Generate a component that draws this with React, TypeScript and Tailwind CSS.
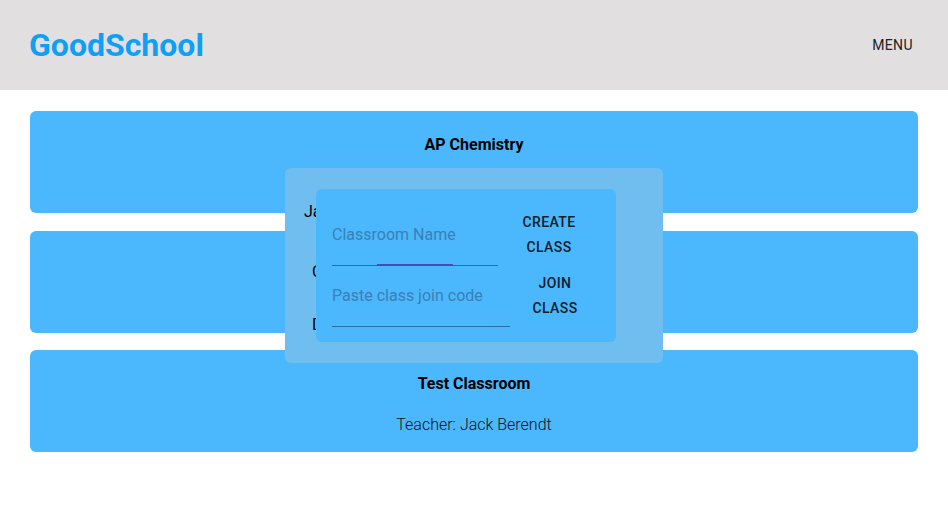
import React from "react";

const cards = [
  { title: "AP Chemistry", teacher: "Teacher: Jack Berendt" },
  { title: "Chemistry", teacher: "Teacher: Jack Berendt" },
  { title: "Test Classroom", teacher: "Teacher: Jack Berendt" },
];

export default function App() {
  return (
    <div
      className="relative w-[948px] h-[531px] bg-white overflow-hidden"
      style={{ fontFamily: "Roboto, 'Noto Sans', sans-serif" }}
    >
      <header className="h-[90px] bg-[#e1dfe0] flex items-center justify-between pl-[29px] pr-[27px]">
        <h1 className="text-[32px] font-bold text-[#0fa0f6] leading-none">GoodSchool</h1>
        <button className="px-2 py-1.5 text-[14px] font-normal tracking-[0.4px] text-[#212121] leading-[24px]">
          MENU
        </button>
      </header>

      <main className="px-[30px] pt-[21px] flex flex-col gap-[17.5px]">
        {cards.map((c) => (
          <div
            key={c.title}
            className="h-[102px] bg-[#4bb8fe] rounded-[6px] flex flex-col items-center pt-[25px] text-black"
          >
            <div className="text-[16px] font-bold leading-[18px]">{c.title}</div>
            <div className="mt-[20px] text-[16px] font-light leading-[24px] text-[#111]">{c.teacher}</div>
          </div>
        ))}
      </main>

      {/* Overlay panel */}
      <div className="absolute left-[285px] top-[168px] w-[378px] h-[195px] bg-[#70bef0] rounded-[6px] text-[16px] text-black">
        <div className="absolute left-[19px] top-[32px] leading-[24px] whitespace-nowrap">Jack Berendt</div>
        <div className="absolute left-[27px] top-[92px] leading-[24px] whitespace-nowrap">Chemistry</div>
        <div className="absolute left-[27px] top-[145px] leading-[24px] whitespace-nowrap">Delete</div>

        <div className="absolute left-[31px] top-[21px] w-[300px] h-[153px] bg-[#4bb8fe] rounded-[6px] pl-[16px] pt-[16px] flex flex-col">
          <div className="flex items-center h-[61px]">
            <div className="relative w-[166px] h-[61px] pt-[18px] border-b border-[#2c6c9c]">
              <div className="text-[16px] leading-[24px] text-[#3a80b4]">Classroom Name</div>
              <div className="absolute left-[45px] bottom-[-1px] w-[76px] h-[2px] bg-[#3f51b5]" />
            </div>
            <button className="ml-[16px] -mt-[2px] w-[70px] text-[14px] font-medium tracking-[0.4px] leading-[25px] text-[#10202c] text-center">
              CREATE
              <br />
              CLASS
            </button>
          </div>
          <div className="flex items-center h-[61px]">
            <div className="relative w-[178px] h-[61px] pt-[18px] border-b border-[#2c6c9c]">
              <div className="text-[16px] leading-[24px] text-[#3a80b4]">Paste class join code</div>
            </div>
            <button className="ml-[13px] -mt-[2px] w-[64px] text-[14px] font-medium tracking-[0.4px] leading-[25px] text-[#10202c] text-center">
              JOIN
              <br />
              CLASS
            </button>
          </div>
        </div>
      </div>
    </div>
  );
}
